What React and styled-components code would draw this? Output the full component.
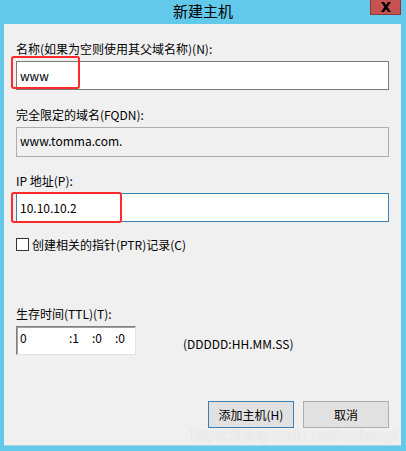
import React from 'react'
import styled, { createGlobalStyle } from 'styled-components'

const Global = createGlobalStyle`
    html, body {
        margin: 0;
        padding: 0;
        background: #63c9eb;
    }
    body {
        font-family: "Noto Sans CJK SC", "Noto Sans", sans-serif;
        font-size: 12px;
        color: #000;
    }
`

const App = () => {
    const [name, setName] = React.useState('www')
    const [ip, setIp] = React.useState('10.10.10.2')
    const [ptr, setPtr] = React.useState(false)

    return (
        <Window>
            <Global />
            <TitleBar>
                <Title>新建主机</Title>
                <CloseBtn>
                    <svg width="12" height="10" viewBox="0 0 12 10">
                        <path d="M1 0 L4 0 L6 3 L8 0 L11 0 L7.5 5 L11 10 L8 10 L6 7 L4 10 L1 10 L4.5 5 Z" fill="#000" />
                    </svg>
                </CloseBtn>
            </TitleBar>
            <Client>
                <Label>名称(如果为空则使用其父域名称)(N):</Label>
                <Field>
                    <Input value={name} onChange={(e) => setName(e.target.value)} />
                    <Mark style={{ left: -5, top: -5, width: 69, height: 33 }} />
                </Field>

                <Label gap={17}>完全限定的域名(FQDN):</Label>
                <ReadOnly>{name ? name + '.' : ''}tomma.com.</ReadOnly>

                <Label gap={16}>IP 地址(P):</Label>
                <Field>
                    <Input focused value={ip} onChange={(e) => setIp(e.target.value)} />
                    <Mark style={{ left: -5, top: -1, width: 111, height: 31 }} />
                </Field>

                <CheckRow onClick={() => setPtr(!ptr)}>
                    <Check>{ptr ? '✓' : ''}</Check>
                    <span>创建相关的指针(PTR)记录(C)</span>
                </CheckRow>

                <Label gap={55}>生存时间(TTL)(T):</Label>
                <TtlRow>
                    <TtlBox>
                        <TtlPart w={49}>0</TtlPart>
                        <TtlPart w={23}>:1</TtlPart>
                        <TtlPart w={23}>:0</TtlPart>
                        <TtlPart w={20}>:0</TtlPart>
                    </TtlBox>
                    <Hint>(DDDDD:HH.MM.SS)</Hint>
                </TtlRow>

                <Buttons>
                    <Btn primary>添加主机(H)</Btn>
                    <Btn>取消</Btn>
                </Buttons>
                <Watermark>https://blog.csdn.net/mshxuyi</Watermark>
            </Client>
        </Window>
    )
}

const Window = styled.div`
    width: 406px;
    height: 451px;
    background: #63c9eb;
    display: flex;
    flex-direction: column;
    overflow: hidden;
`
const TitleBar = styled.div`
    height: 24px;
    display: flex;
    align-items: flex-start;
    justify-content: center;
    position: relative;
`
const Title = styled.div`
    font-size: 15px;
    line-height: 24px;
    margin-top: -1px;
    color: #000;
`
const CloseBtn = styled.div`
    position: absolute;
    right: 5px;
    top: 0;
    width: 31px;
    height: 15px;
    background: #c75050;
    border: 1px solid #8a3a3a;
    border-top: none;
    box-sizing: border-box;
    display: flex;
    align-items: center;
    justify-content: center;
`
const Client = styled.div`
    margin: 0 5px 5px 4px;
    height: 422px;
    background: #f0f0f0;
    border-bottom: 1px solid #a9d5e6;
    box-sizing: border-box;
    padding: 17px 12px 0 12px;
    display: flex;
    flex-direction: column;
    position: relative;
`
const Label = styled.div`
    line-height: 16px;
    height: 16px;
    margin-top: ${(p) => p.gap || 0}px;
    margin-bottom: 4px;
    white-space: nowrap;
`
const Field = styled.div`
    position: relative;
    height: 29px;
`
const Input = styled.input`
    width: 100%;
    height: 29px;
    box-sizing: border-box;
    border: 1px solid ${(p) => (p.focused ? '#3c7fb1' : '#7a7a7a')};
    background: #fff;
    font-family: inherit;
    font-size: 12px;
    padding: 0 0 0 3px;
    margin: 0;
    outline: none;
`
const Mark = styled.div`
    position: absolute;
    border: 2px solid #ff2a2a;
    border-radius: 3px;
    box-sizing: border-box;
    pointer-events: none;
`
const ReadOnly = styled.div`
    height: 30px;
    box-sizing: border-box;
    border: 1px solid #adadad;
    background: #f0f0f0;
    line-height: 26px;
    padding-left: 3px;
`
const CheckRow = styled.label`
    display: flex;
    align-items: center;
    gap: 3px;
    margin-top: 15px;
    height: 14px;
    cursor: default;
`
const Check = styled.span`
    width: 13px;
    height: 13px;
    box-sizing: border-box;
    border: 1px solid #333;
    background: #fff;
    font-size: 10px;
    line-height: 11px;
    text-align: center;
`
const TtlRow = styled.div`
    display: flex;
    align-items: center;
    gap: 47px;
`
const TtlBox = styled.div`
    width: 120px;
    height: 29px;
    box-sizing: border-box;
    border: 1px solid;
    border-color: #828282 #e3e3e3 #e3e3e3 #828282;
    box-shadow: inset 1px 1px 0 #a0a0a0;
    background: #fff;
    display: flex;
    padding: 3px 0 0 3px;
`
const TtlPart = styled.span`
    width: ${(p) => p.w}px;
    line-height: 16px;
`
const Hint = styled.div`
    padding-top: 6px;
`
const Buttons = styled.div`
    margin-top: 46px;
    display: flex;
    justify-content: flex-end;
    gap: 9px;
`
const Btn = styled.button`
    width: 86px;
    height: 27px;
    box-sizing: border-box;
    background: #e1e1e1;
    border: 1px solid ${(p) => (p.primary ? '#3c7fb1' : '#adadad')};
    font-family: inherit;
    font-size: 12px;
    padding: 0;
    color: #000;
`
const Watermark = styled.div`
    position: absolute;
    right: 4px;
    bottom: 0px;
    font-family: "Liberation Sans", sans-serif;
    font-size: 16px;
    color: rgba(255, 255, 255, 0.7);
    text-shadow: 0 0 1px rgba(170, 170, 170, 0.5);
    pointer-events: none;
`

export default App
